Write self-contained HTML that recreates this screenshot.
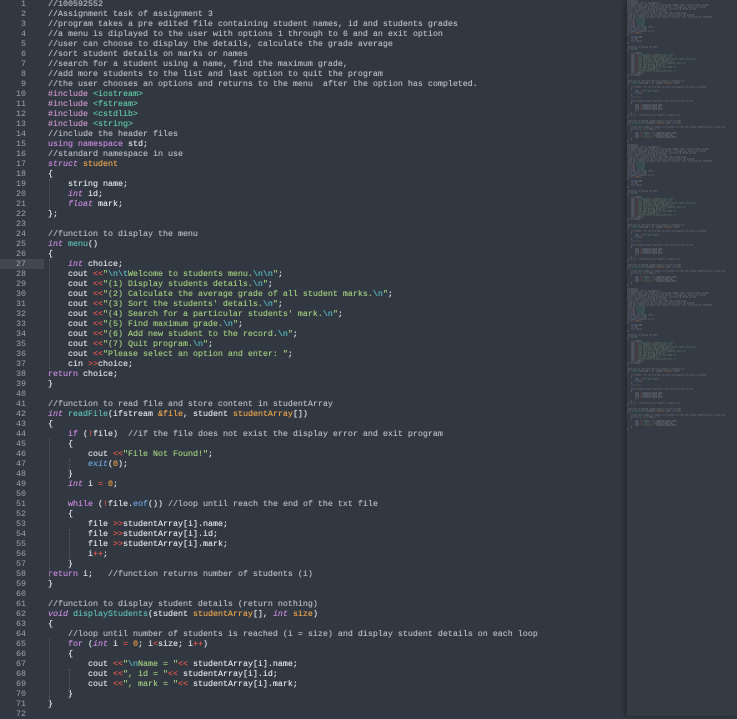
<!DOCTYPE html>
<html><head><meta charset="utf-8"><style>
html,body{margin:0;padding:0;width:737px;height:716px;overflow:hidden;background:#323841;}
#g{position:absolute;left:0;top:-1px;width:44px;font:8.33px/10px "Liberation Mono",monospace;color:#9ba1a8;}
#g div{height:10px;text-align:right;padding-right:18px;box-sizing:border-box;}
#g div.hl{background:#414852;}
#code{position:absolute;left:48px;top:-1px;font:8.33px/10px "Liberation Mono",monospace;color:#dde0e5;white-space:pre;margin:0;text-shadow:0 0 0.4px currentColor;}
#code div{height:10px;}
.c{color:#b3b8bf}.k{color:#c386d8}.i{font-style:italic}.f{color:#5cb8b2}.s{color:#9cc77c}
.o{color:#e0564a}.n{color:#e59a45}.p{color:#e5a04b}.e{color:#56b6c2}.b{color:#6a9fd8;font-style:italic}
.h{color:#5fc3a2}.pp{color:#c792c8}
.gd{position:absolute;width:0;border-left:1px dotted #555c66;}
#mm{position:absolute;left:627px;top:0;width:110px;height:716px;background:#343b44;box-shadow:-3px 0 4px rgba(0,0,0,.25);overflow:hidden;}
#mmc{position:absolute;left:0;top:0;width:110px;height:542px;overflow:hidden;}
#mmi{position:absolute;left:0;top:0;transform:scale(0.2);transform-origin:0 0;opacity:.75;}
</style></head><body>
<div id="g"></div>
<pre id="code"><div><span class="c">//100592552</span></div><div><span class="c">//Assignment task of assignment 3</span></div><div><span class="c">//program takes a pre edited file containing student names, id and students grades</span></div><div><span class="c">//a menu is diplayed to the user with options 1 through to 6 and an exit option</span></div><div><span class="c">//user can choose to display the details, calculate the grade average</span></div><div><span class="c">//sort student details on marks or names</span></div><div><span class="c">//search for a student using a name, find the maximum grade,</span></div><div><span class="c">//add more students to the list and last option to quit the program</span></div><div><span class="c">//the user chooses an options and returns to the menu  after the option has completed.</span></div><div><span class="pp">#include</span> <span class="h">&lt;iostream&gt;</span></div><div><span class="pp">#include</span> <span class="h">&lt;fstream&gt;</span></div><div><span class="pp">#include</span> <span class="h">&lt;cstdlib&gt;</span></div><div><span class="pp">#include</span> <span class="h">&lt;string&gt;</span></div><div><span class="c">//include the header files</span></div><div><span class="k">using namespace</span> std;</div><div><span class="c">//standard namespace in use</span></div><div><span class="k i">struct</span> <span class="p">student</span></div><div>{</div><div>    string name;</div><div>    <span class="k i">int</span> id;</div><div>    <span class="k i">float</span> mark;</div><div>};</div><div> </div><div><span class="c">//function to display the menu</span></div><div><span class="k i">int</span> <span class="f">menu</span>()</div><div>{</div><div>    <span class="k i">int</span> choice;</div><div>    cout <span class="o">&lt;&lt;</span><span class="s">"<span class="e">\n\t</span>Welcome to students menu.<span class="e">\n\n</span>"</span>;</div><div>    cout <span class="o">&lt;&lt;</span><span class="s">"(1) Display students details.<span class="e">\n</span>"</span>;</div><div>    cout <span class="o">&lt;&lt;</span><span class="s">"(2) Calculate the average grade of all student marks.<span class="e">\n</span>"</span>;</div><div>    cout <span class="o">&lt;&lt;</span><span class="s">"(3) Sort the students' details.<span class="e">\n</span>"</span>;</div><div>    cout <span class="o">&lt;&lt;</span><span class="s">"(4) Search for a particular students' mark.<span class="e">\n</span>"</span>;</div><div>    cout <span class="o">&lt;&lt;</span><span class="s">"(5) Find maximum grade.<span class="e">\n</span>"</span>;</div><div>    cout <span class="o">&lt;&lt;</span><span class="s">"(6) Add new student to the record.<span class="e">\n</span>"</span>;</div><div>    cout <span class="o">&lt;&lt;</span><span class="s">"(7) Quit program.<span class="e">\n</span>"</span>;</div><div>    cout <span class="o">&lt;&lt;</span><span class="s">"Please select an option and enter: "</span>;</div><div>    cin <span class="o">&gt;&gt;</span>choice;</div><div><span class="k">return</span> choice;</div><div>}</div><div> </div><div><span class="c">//function to read file and store content in studentArray</span></div><div><span class="k i">int</span> <span class="f">readFile</span>(ifstream <span class="p">&amp;file</span>, student <span class="p">studentArray</span>[])</div><div>{</div><div>    <span class="k">if</span> (<span class="o">!</span>file)  <span class="c">//if the file does not exist the display error and exit program</span></div><div>    {</div><div>        cout <span class="o">&lt;&lt;</span><span class="s">"File Not Found!"</span>;</div><div>        <span class="b">exit</span>(<span class="n">0</span>);</div><div>    }</div><div>    <span class="k i">int</span> i <span class="o">=</span> <span class="n">0</span>;</div><div> </div><div>    <span class="k">while</span> (<span class="o">!</span>file.<span class="b" style="font-style:normal">eof</span>()) <span class="c">//loop until reach the end of the txt file</span></div><div>    {</div><div>        file <span class="o">&gt;&gt;</span>studentArray[i].name;</div><div>        file <span class="o">&gt;&gt;</span>studentArray[i].id;</div><div>        file <span class="o">&gt;&gt;</span>studentArray[i].mark;</div><div>        i<span class="o">++</span>;</div><div>    }</div><div><span class="k">return</span> i;   <span class="c">//function returns number of students (i)</span></div><div>}</div><div> </div><div><span class="c">//function to display student details (return nothing)</span></div><div><span class="k i">void</span> <span class="f">displayStudents</span>(student <span class="p">studentArray</span>[], <span class="k i">int</span> <span class="p">size</span>)</div><div>{</div><div>    <span class="c">//loop until number of students is reached (i = size) and display student details on each loop</span></div><div>    <span class="k">for</span> (<span class="k i">int</span> i <span class="o">=</span> <span class="n">0</span>; i<span class="o">&lt;</span>size; i<span class="o">++</span>)</div><div>    {</div><div>        cout <span class="o">&lt;&lt;</span><span class="s">"<span class="e">\n</span>Name = "</span><span class="o">&lt;&lt;</span> studentArray[i].name;</div><div>        cout <span class="o">&lt;&lt;</span><span class="s">", id = "</span><span class="o">&lt;&lt;</span> studentArray[i].id;</div><div>        cout <span class="o">&lt;&lt;</span><span class="s">", mark = "</span><span class="o">&lt;&lt;</span> studentArray[i].mark;</div><div>    }</div><div>}</div><div> </div></pre>
<div class="gd" style="left:49px;top:179px;height:30px"></div>
<div class="gd" style="left:49px;top:259px;height:110px"></div>
<div class="gd" style="left:49px;top:439px;height:140px"></div>
<div class="gd" style="left:69px;top:459px;height:20px"></div>
<div class="gd" style="left:69px;top:529px;height:40px"></div>
<div class="gd" style="left:49px;top:639px;height:70px"></div>
<div class="gd" style="left:69px;top:669px;height:30px"></div>
<div id="mm"><div id="mmc"><div id="mmi"></div></div></div>
<script>
var g=document.getElementById('g'),h='';
for(var i=1;i<=72;i++)h+='<div'+(i==27?' class="hl"':'')+'>'+i+'</div>';
g.innerHTML=h;
var code=document.getElementById('code').outerHTML.replace('id="code"','style="margin:0;font:8.33px/10px Liberation Mono,monospace;color:#d7dae0;white-space:pre"');
var mm='';for(var j=0;j<3;j++)mm+=code;
document.getElementById('mmi').innerHTML=mm;
</script>
</body></html>
